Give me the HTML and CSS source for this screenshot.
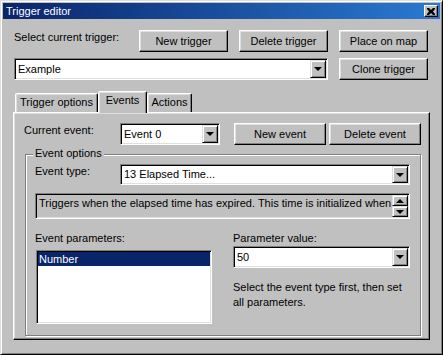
FILE: index.html
```html
<!DOCTYPE html>
<html lang="en">
<head>
    <title>Trigger editor</title>
    <link rel="stylesheet" href="styles.css">
</head>
<body>
    <div class="window">

        <div class="titlebar">
            <span class="title">Trigger editor</span>
            <div class="close">
                <svg width="8" height="7" viewBox="0 0 8 7">
                    <path d="M0 0h2l2 2 2-2h2v1l-2 2.5 2 2.5v1h-2l-2-2-2 2h-2v-1l2-2.5-2-2.5z" fill="#000"/>
                </svg>
            </div>
        </div>

        <div class="content">
            <div class="row">
                <span class="label labelTrigger">Select current trigger:</span>
                <button class="btn">New trigger</button>
                <button class="btn">Delete trigger</button>
                <button class="btn">Place on map</button>
            </div>

            <div class="row rowCombo">
                <div class="combo comboTrigger">
                    <span class="comboText">Example</span>
                    <span class="drop"><span class="arrow"></span></span>
                </div>
                <button class="btn">Clone trigger</button>
            </div>

            <div class="tabs">
                <div class="tabStrip">
                    <div class="tab tabOptions">Trigger options</div>
                    <div class="tab tabEvents active">Events</div>
                    <div class="tab tabActions">Actions</div>
                </div>

                <div class="panel">
                    <div class="row">
                        <span class="label labelEvent">Current event:</span>
                        <div class="combo comboEvent">
                            <span class="comboText">Event 0</span>
                            <span class="drop"><span class="arrow"></span></span>
                        </div>
                        <button class="btn btnEvent btnNew">New event</button>
                        <button class="btn btnEvent">Delete event</button>
                    </div>

                    <div class="group">
                        <span class="legend">Event options</span>

                        <div class="row">
                            <span class="label labelType">Event type:</span>
                            <div class="combo comboType">
                                <span class="comboText">13 Elapsed Time...</span>
                                <span class="drop"><span class="arrow"></span></span>
                            </div>
                        </div>

                        <div class="desc">
                            <span class="descText">Triggers when the elapsed time has expired. This time is initialized when</span>
                            <div class="scroll">
                                <span class="scrollBtn"><span class="arrow up"></span></span>
                                <span class="scrollBtn"><span class="arrow"></span></span>
                            </div>
                        </div>

                        <div class="params">
                            <div class="col">
                                <span class="label">Event parameters:</span>
                                <div class="listbox">
                                    <div class="item selected">Number</div>
                                </div>
                            </div>
                            <div class="col">
                                <span class="label">Parameter value:</span>
                                <div class="combo comboValue">
                                    <span class="comboText">50</span>
                                    <span class="drop"><span class="arrow"></span></span>
                                </div>
                                <p class="hint">Select the event type first, then set all parameters.</p>
                            </div>
                        </div>
                    </div>
                </div>
            </div>
        </div>

    </div>
</body>
</html>
```

FILE: styles.css
```css
* {
    box-sizing: border-box;
    margin: 0;
    padding: 0;
}

body {
    background: #c0c0c0;
    font-family: 'Liberation Sans', Arial, sans-serif;
    font-size: 11px;
    line-height: 13px;
    color: #000;
}

.window {
    width: 443px;
    height: 355px;
    padding: 2px;
    background: #c0c0c0;
    border: 1px solid;
    border-color: #dfdfdf #000 #000 #dfdfdf;
    box-shadow: inset 1px 1px #fff, inset -1px -1px #808080;
}

/* title bar */
.titlebar {
    height: 16px;
    display: flex;
    align-items: center;
    justify-content: space-between;
    padding: 0 2px 0 3px;
    color: #fff;
    background: linear-gradient(to right, #0a246a, #2a7ad2);
}

.close {
    width: 14px;
    height: 12px;
    display: flex;
    align-items: center;
    justify-content: center;
    background: #c0c0c0;
    border: 1px solid;
    border-color: #fff #000 #000 #fff;
    box-shadow: inset -1px -1px #808080;
}

/* content */
.content {
    padding: 11px 12px 0 11px;
}

.row {
    display: flex;
    align-items: flex-start;
}

.label {
    display: block;
    padding-top: 1px;
}

.labelTrigger {
    width: 114px;
    margin-right: 11px;
}

.row .btn + .btn {
    margin-left: 11px;
}

.rowCombo {
    margin-top: 6px;
}

.btn {
    width: 89px;
    height: 22px;
    background: #c0c0c0;
    border: 1px solid;
    border-color: #fff #000 #000 #fff;
    box-shadow: inset -1px -1px #808080, inset 1px 1px #dfdfdf;
    font: inherit;
    color: #000;
}

/* combo box */
.combo {
    height: 22px;
    display: flex;
    padding: 1px;
    background: #fff;
    border: 1px solid;
    border-color: #808080 #fff #fff #808080;
    box-shadow: inset 1px 1px #000, inset -1px -1px #dfdfdf;
}

.comboText {
    flex: 1;
    align-self: center;
    padding-left: 2px;
    white-space: nowrap;
}

.drop {
    width: 16px;
    display: flex;
    align-items: center;
    justify-content: center;
    background: #c0c0c0;
    border: 1px solid;
    border-color: #dfdfdf #000 #000 #dfdfdf;
    box-shadow: inset 1px 1px #fff, inset -1px -1px #808080;
}

.arrow {
    width: 0;
    height: 0;
    border-left: 4px solid transparent;
    border-right: 4px solid transparent;
    border-top: 4px solid #000;
}

.arrow.up {
    border-top: none;
    border-bottom: 4px solid #000;
}

.comboTrigger {
    width: 314px;
    margin-right: 11px;
}

/* tabs */
.tabs {
    margin: 11px -2px 0 -1px;
}

.tabStrip {
    height: 21px;
    display: flex;
    align-items: flex-end;
    padding-left: 2px;
}

.tab {
    height: 19px;
    padding-top: 2px;
    text-align: center;
    background: #c0c0c0;
    border: 1px solid;
    border-bottom: none;
    border-color: #fff #000 transparent #fff;
    border-radius: 2px 2px 0 0;
    box-shadow: inset -1px 0 #808080, inset 1px 1px #dfdfdf;
}

.tabOptions {
    width: 83px;
}

.tabEvents {
    width: 49px;
}

.tabActions {
    width: 45px;
}

.tab.active {
    height: 22px;
    margin-bottom: -1px;
    position: relative;
    z-index: 1;
}

.panel {
    height: 228px;
    padding: 10px 8px 4px 10px;
    border: 1px solid;
    border-color: #fff #000 #000 #fff;
    box-shadow: inset -1px -1px #808080, inset 1px 1px #dfdfdf;
}

.labelEvent {
    width: 96px;
}

.comboEvent {
    width: 100px;
}

.btnEvent {
    width: 92px;
}

.row .btnNew {
    margin-left: 14px;
}

.row .btnNew + .btn {
    margin-left: 3px;
}

/* group box */
.group {
    position: relative;
    margin: 9px 0 0 1px;
    padding: 9px 10px 11px 9px;
    border: 1px solid #808080;
    box-shadow: inset 1px 1px #fff, 1px 1px #fff;
}

.legend {
    position: absolute;
    top: -8px;
    left: 7px;
    padding: 0 2px;
    background: #c0c0c0;
}

.labelType {
    width: 85px;
}

.comboType {
    flex: 1;
    height: 21px;
}

.desc {
    height: 26px;
    margin-top: 8px;
    display: flex;
    padding: 1px;
    border: 1px solid;
    border-color: #808080 #fff #fff #808080;
    box-shadow: inset 1px 1px #000, inset -1px -1px #dfdfdf;
}

.descText {
    flex: 1;
    padding: 2px 0 0 2px;
    white-space: nowrap;
    overflow: hidden;
}

.scroll {
    width: 16px;
    display: flex;
    flex-direction: column;
}

.scrollBtn {
    flex: 1;
    display: flex;
    align-items: center;
    justify-content: center;
    border: 1px solid;
    border-color: #dfdfdf #000 #000 #dfdfdf;
    box-shadow: inset 1px 1px #fff, inset -1px -1px #808080;
}

.params {
    display: flex;
    margin-top: 12px;
}

.col {
    width: 177px;
}

.col + .col {
    margin-left: 21px;
}

.listbox {
    height: 74px;
    margin: 5px 0 0 1px;
    padding: 1px;
    background: #fff;
    border: 1px solid;
    border-color: #808080 #fff #fff #808080;
    box-shadow: inset 1px 1px #000, inset -1px -1px #dfdfdf;
}

.item {
    height: 14px;
    padding: 1px 0 0 1px;
}

.item.selected {
    background: #0a246a;
    color: #fff;
}

.comboValue {
    margin-top: 1px;
}

.hint {
    margin-top: 12px;
    line-height: 15px;
}
```
